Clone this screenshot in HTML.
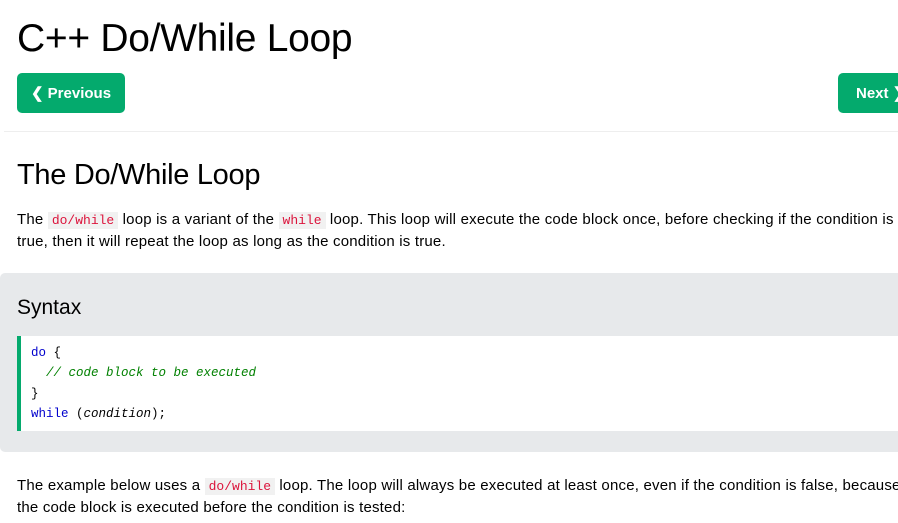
<!DOCTYPE html>
<html><head><meta charset="utf-8"><style>
html,body{margin:0;padding:0;background:#fff;width:898px;height:523px;overflow:hidden}
body{font-family:"Liberation Sans",Arial,sans-serif;color:#000;position:relative}
h1{position:absolute;left:17px;top:15px;margin:0;font-size:39px;font-weight:normal;line-height:48px;letter-spacing:-0.3px}
.btn{position:absolute;top:73px;height:40px;background:#04AA6D;color:#fff;border-radius:5px;font-weight:bold;font-size:15px;line-height:42px;text-align:center}
hr{position:absolute;left:4px;top:131px;width:900px;margin:0;border:0;border-top:1px solid #eee}
h2{position:absolute;left:17px;top:156px;margin:0;font-size:29px;font-weight:normal;line-height:38px;letter-spacing:-0.3px}
p{position:absolute;left:17px;margin:0;font-size:15px;line-height:22px;white-space:nowrap;letter-spacing:0.2px}
code{font-family:"Liberation Mono",monospace;color:#DC143C;background:#f1f1f1;font-size:13px;padding:1px 4px;letter-spacing:0}
.panel{position:absolute;left:0;top:273px;width:910px;height:179px;background:#E7E9EB;border-radius:5px}
.syn{position:absolute;left:17px;top:294px;font-size:21px;line-height:28px}
.code{position:absolute;left:17px;top:336px;width:890px;height:95px;background:#fff;border-left:4px solid #04AA6D;box-sizing:border-box}
.code pre{margin:0;position:absolute;left:10px;top:7px;font-family:"Liberation Mono",monospace;font-size:12.5px;line-height:20.3px;color:#000}
.k{color:mediumblue}.c{color:green;font-style:italic}
</style></head><body>
<h1>C++ Do/While Loop</h1>
<div class="btn" style="left:17px;width:108px">&#10094; Previous</div>
<div class="btn" style="left:838px;width:80px;text-align:left;padding-left:18px;box-sizing:border-box">Next &#10095;</div>
<hr>
<h2>The Do/While Loop</h2>
<p style="top:209px">The <code>do/while</code> loop is a variant of the <code>while</code> loop. This loop will execute the code block once, before checking if the condition is</p>
<p style="top:231px">true, then it will repeat the loop as long as the condition is true.</p>
<div class="panel"></div>
<div class="syn">Syntax</div>
<div class="code"><pre><span class="k">do</span> {
  <span class="c">// code block to be executed</span>
}
<span class="k">while</span> (<i>condition</i>);</pre></div>
<p style="top:475px">The example below uses a <code>do/while</code> loop. The loop will always be executed at least once, even if the condition is false, because</p>
<p style="top:497px">the code block is executed before the condition is tested:</p>
</body></html>
